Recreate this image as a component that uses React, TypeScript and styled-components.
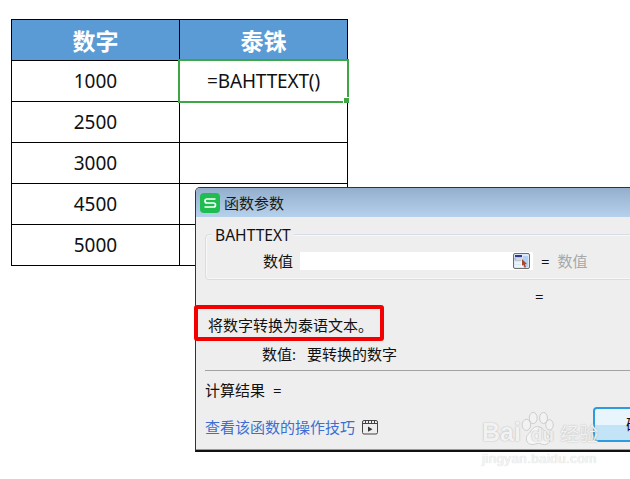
import React from "react";
import styled, { createGlobalStyle } from "styled-components";

const Global = createGlobalStyle`
  html, body { margin: 0; padding: 0; background: #fff; overflow: hidden; height: 479px; }
  #root { width: 630px; height: 479px; position: relative; overflow: hidden; }
  * { box-sizing: border-box; }
`;
const cjk = `"Noto Sans", "Noto Sans CJK SC", sans-serif`;

const Page = styled.div`
  width: 630px;
  height: 479px;
  padding: 19px 0 0 11px;
  position: relative;
  overflow: hidden;
  font-family: ${cjk};
  color: #111;
`;
const Sheet = styled.div`
  display: grid;
  grid-template-columns: 168px 168px;
  grid-template-rows: 41px repeat(5, 41px);
  width: 337px;
  border-top: 1px solid #000;
  border-left: 1px solid #000;
`;
const Cell = styled.div<{ $head?: boolean; $active?: boolean }>`
  border-right: 1px solid #000;
  border-bottom: 1px solid #000;
  display: flex;
  align-items: center;
  justify-content: center;
  position: relative;
  z-index: ${(p) => (p.$active ? 1 : 0)};
  background: ${(p) => (p.$head ? "#5b9bd5" : "#fff")};
  color: ${(p) => (p.$head ? "#fff" : "#111")};
  font-size: ${(p) => (p.$head ? "23px" : "19px")};
  font-weight: ${(p) => (p.$head ? 700 : 400)};
  padding-bottom: ${(p) => (p.$head ? "1px" : "0")};
  letter-spacing: ${(p) => (p.$active ? "-0.15px" : "0")};
`;
const Selection = styled.div`
  position: absolute;
  left: -2px;
  top: -2px;
  right: -2px;
  bottom: -2px;
  border: 2px solid #3fa648;
  pointer-events: none;
  &::after {
    content: "";
    position: absolute;
    right: -2px;
    bottom: -2px;
    width: 5px;
    height: 5px;
    background: #3fa648;
    border-left: 1px solid #fff;
    border-top: 1px solid #fff;
  }
`;
const Dialog = styled.div`
  position: absolute;
  left: 195px;
  top: 187px;
  width: 520px;
  height: 265px;
  z-index: 2;
  background: #eeeeee;
  border: 1px solid #333;
  border-bottom: 2px solid #111;
  border-radius: 5px 5px 0 0;
  display: flex;
  flex-direction: column;
  font-size: 15px;
  line-height: 20px;
`;
const TitleBar = styled.div`
  height: 29px;
  flex: none;
  display: flex;
  align-items: center;
  gap: 4px;
  padding-left: 4px;
  border-radius: 4px 4px 0 0;
  background: linear-gradient(#93afcd, #b6d1ec);
  color: #1a1a1a;
`;
const Logo = styled.svg`
  width: 20px;
  height: 20px;
  flex: none;
`;
const Content = styled.div`
  flex: 1;
  padding: 17px 0 0 9px;
  display: flex;
  flex-direction: column;
  background: #eeeeee;
  border-bottom: 1px solid #35bfe0;
`;
const Group = styled.div`
  height: 46px;
  border: 1px solid #d6dde4;
  border-radius: 4px;
  box-shadow: inset 0 0 0 1px #f8f8f8;
  position: relative;
`;
const Legend = styled.div`
  position: absolute;
  left: 6px;
  top: -10px;
  padding: 0 3px;
  background: #eeeeee;
  line-height: 20px;
  font-size: 15.6px;
`;
const ParamRow = styled.div`
  display: flex;
  align-items: center;
  height: 18px;
  margin-top: 17px;
  padding-left: 57px;
`;
const ParamLabel = styled.span`
  width: 37px;
  flex: none;
`;
const ParamInput = styled.div`
  width: 233px;
  height: 18px;
  background: #fff;
  flex: none;
  display: flex;
  justify-content: flex-end;
  align-items: center;
  padding-right: 3px;
`;
const Picker = styled.svg`
  width: 17px;
  height: 16px;
`;
const Eq = styled.span`
  margin-left: 8px;
`;
const Hint = styled.span`
  margin-left: 8px;
  color: #a8a8a8;
`;
const ResultEq = styled.div`
  height: 20px;
  margin-top: 6px;
  padding-left: 330px;
`;
const Desc = styled.div`
  margin-top: 9px;
  padding-left: 3px;
  height: 20px;
`;
const ArgHelp = styled.div`
  margin-top: 9px;
  padding-left: 57px;
  display: flex;
  gap: 11px;
  height: 20px;
`;
const Rule = styled.div`
  height: 1px;
  background: #a3a3a3;
  margin-top: 6px;
`;
const Result = styled.div`
  margin-top: 9px;
  height: 20px;
  display: flex;
  gap: 8px;
`;
const Foot = styled.div`
  margin-top: 17px;
  height: 20px;
  display: flex;
  align-items: center;
  gap: 7px;
  color: #3c6fd3;
`;
const Clip = styled.svg`
  width: 16px;
  height: 16px;
`;
const OkButton = styled.div`
  position: absolute;
  left: 397px;
  top: 219px;
  width: 90px;
  height: 35px;
  border: 2px solid #2c9be0;
  border-radius: 4px;
  background: linear-gradient(#e9f5fd 0 50%, #c3e3f7 50% 100%);
  display: flex;
  align-items: center;
  padding: 0 0 2px 31px;
  color: #111;
`;
const RedBox = styled.div`
  position: absolute;
  left: 194px;
  top: 305px;
  width: 190px;
  height: 36px;
  z-index: 3;
  border: 4px solid #f50000;
  border-radius: 3px;
  pointer-events: none;
`;
const Mark = styled.div`
  position: absolute;
  left: 482px;
  top: 411px;
  width: 148px;
  height: 68px;
  z-index: 4;
  color: #f2f2f2;
  pointer-events: none;
  font-family: "Liberation Sans", "Noto Sans CJK SC", sans-serif;
  text-shadow: 0 0 1.5px #a8a8a8;
`;
const Paw = styled.svg`
  position: absolute;
  left: 39px;
  top: 1px;
  width: 33px;
  height: 36px;
`;
const MarkRow = styled.div`
  display: flex;
  align-items: baseline;
  height: 40px;
  padding-top: 5px;
  font-size: 25px;
  font-weight: 700;
  line-height: 32px;
  position: relative;
`;
const MarkDu = styled.span`
  margin-left: 10px;
  font-size: 19px;
  color: #eeeeee;
  position: relative;
`;
const MarkCn = styled.span`
  margin-left: 6px;
  font-size: 19px;
  font-weight: 400;
  position: relative;
`;
const MarkUrl = styled.div`
  font-size: 13.6px;
  line-height: 16px;
  font-weight: 400;
  letter-spacing: 0.3px;
  color: #f6f6f6;
  text-shadow: 0 0 1px #c4c4c4;
`;

const rows: [string, boolean?][] = [["1000", true], ["2500"], ["3000"], ["4500"], ["5000"]];

export default function App() {
  return (
    <Page>
      <Global />
      <Sheet>
        <Cell $head>数字</Cell>
        <Cell $head>泰铢</Cell>
        {rows.map(([n, active]) => (
          <React.Fragment key={n}>
            <Cell>{n}</Cell>
            <Cell $active={active}>
              {active && "=BAHTTEXT()"}
              {active && <Selection />}
            </Cell>
          </React.Fragment>
        ))}
      </Sheet>

      <Dialog>
        <TitleBar>
          <Logo viewBox="0 0 20 20">
            <rect width="20" height="20" rx="4" fill="#1fbd50" />
            <path d="M15.5 6.2H7a2 2 0 0 0 0 4h6.500a2 2 0 0 1 0 4H4.500" transform="translate(0 -.2)" fill="none" stroke="#fff" strokeWidth="1.7" />
          </Logo>
          函数参数
        </TitleBar>
        <Content>
          <Group>
            <Legend>BAHTTEXT</Legend>
            <ParamRow>
              <ParamLabel>数值</ParamLabel>
              <ParamInput>
                <Picker viewBox="0 0 17 16">
                  <rect x=".5" y=".5" width="16" height="15" rx="1.5" fill="#dbe8f8" stroke="#6f6f6f" />
                  <rect x="2" y="2" width="7" height="2" fill="#2f3a94" />
                  <rect x="2" y="5" width="7" height="2" fill="#fff" stroke="#666" strokeWidth=".5" />
                  <path d="M2 10h13M2 13h13M9 5v9" stroke="#fff" />
                  <rect x="10" y="3" width="5" height="11" fill="#a9c9f5" opacity=".8" />
                  <path d="M9 6l5 5-2 .3 1 3-1.400.4-1-3-1.600 1z" fill="#a9482c" />
                </Picker>
              </ParamInput>
              <Eq>=</Eq>
              <Hint>数值</Hint>
            </ParamRow>
          </Group>
          <ResultEq>=</ResultEq>
          <Desc>将数字转换为泰语文本。</Desc>
          <ArgHelp>
            <span>数值:</span>
            <span>要转换的数字</span>
          </ArgHelp>
          <Rule />
          <Result>
            <span>计算结果</span>
            <span>=</span>
          </Result>
          <Foot>
            查看该函数的操作技巧
            <Clip viewBox="0 0 16 16">
              <rect x=".5" y="1.5" width="15" height="13.5" rx="1.5" fill="none" stroke="#444" />
              <path d="M1 4.500h14" stroke="#444" />
              <path d="M3.500 2v2.500M6.500 2v2.500M9.500 2v2.500M12.500 2v2.500" stroke="#444" />
              <path d="M6 7.500l4.500 2.700L6 12.800z" fill="#333" />
            </Clip>
          </Foot>
        </Content>
        <OkButton>确定</OkButton>
      </Dialog>
      <RedBox />
      <Mark>
        <MarkRow>
          <Paw viewBox="0 0 38 42">
            <g fill="#f2f2f2" stroke="#bdbdbd" strokeWidth=".8">
              <ellipse cx="6" cy="15" rx="5" ry="6.500" />
              <ellipse cx="14" cy="7" rx="4.600" ry="6.500" />
              <ellipse cx="26" cy="7" rx="4.600" ry="6.500" />
              <ellipse cx="33" cy="15" rx="4.400" ry="6" />
              <path d="M19 17c-6 0-7 6-11 9-4 4-2 12 5 12 3 0 5-1.500 7-1.500s4 1.500 7 1.500c7 0 9-8 4-12-4-3-6-9-12-9z" fill="#f6f6f6" />
            </g>
          </Paw>
          <span>Bai</span>
          <MarkDu>du</MarkDu>
          <MarkCn>经验</MarkCn>
        </MarkRow>
        <MarkUrl>jingyan.baidu.com</MarkUrl>
      </Mark>
    </Page>
  );
}
